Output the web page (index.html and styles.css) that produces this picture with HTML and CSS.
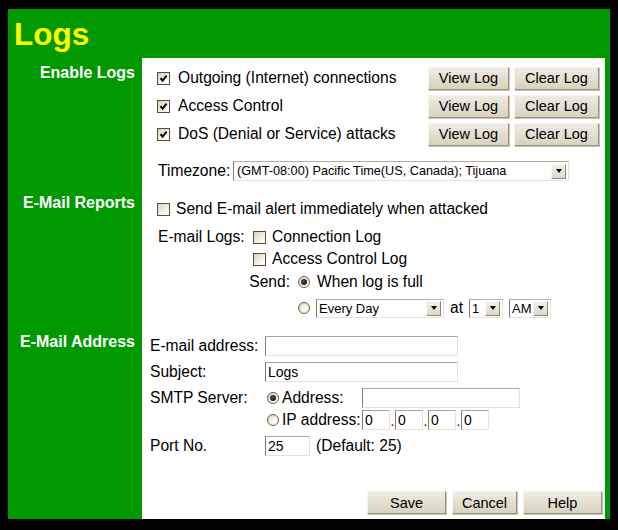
FILE: index.html
```html
<!DOCTYPE html>
<html>
<head>
<meta charset="utf-8">
<title>Logs</title>
<link rel="stylesheet" href="styles.css">
</head>
<body>
<div class="frame">
  <h1 class="title">Logs</h1>
  <div class="grid">
    <div class="side">Enable Logs</div>
    <div class="main logs">
      <div class="logrow">
        <span class="cb on"><svg viewBox="0 0 11 11" width="11" height="11"><path d="M2.5 5.2 L4.6 7.6 L8.6 2.6" fill="none" stroke="#000" stroke-width="2"/></svg></span>
        <span class="lbl">Outgoing (Internet) connections</span>
        <span class="btn view">View Log</span><span class="btn clear">Clear Log</span>
      </div>
      <div class="logrow">
        <span class="cb on"><svg viewBox="0 0 11 11" width="11" height="11"><path d="M2.5 5.2 L4.6 7.6 L8.6 2.6" fill="none" stroke="#000" stroke-width="2"/></svg></span>
        <span class="lbl">Access Control</span>
        <span class="btn view">View Log</span><span class="btn clear">Clear Log</span>
      </div>
      <div class="logrow">
        <span class="cb on"><svg viewBox="0 0 11 11" width="11" height="11"><path d="M2.5 5.2 L4.6 7.6 L8.6 2.6" fill="none" stroke="#000" stroke-width="2"/></svg></span>
        <span class="lbl">DoS (Denial or Service) attacks</span>
        <span class="btn view">View Log</span><span class="btn clear">Clear Log</span>
      </div>
      <div class="tzrow">
        <span>Timezone:</span>
        <div class="sel tz"><span class="val">(GMT-08:00) Pacific Time(US, Canada); Tijuana</span><span class="arr"></span></div>
      </div>
    </div>

    <div class="side">E-Mail Reports</div>
    <div class="main reports">
      <div class="rrow r1"><span class="cb"></span><span class="t6">Send E-mail alert immediately when attacked</span></div>
      <div class="rrow r2"><span class="elab">E-mail Logs:</span><span class="cb"></span><span class="t6">Connection Log</span></div>
      <div class="rrow r3"><span class="ind"></span><span class="cb"></span><span class="t6">Access Control Log</span></div>
      <div class="rrow r4"><span class="slab">Send:</span><span class="rb on"></span><span class="t7">When log is full</span></div>
      <div class="rrow r5"><span class="ind2"></span><span class="rb"></span>
        <div class="sel day"><span class="val">Every Day</span><span class="arr"></span></div>
        <span class="at">at</span>
        <div class="sel hr"><span class="val">1</span><span class="arr"></span></div>
        <div class="sel ampm"><span class="val">AM</span><span class="arr"></span></div>
      </div>
    </div>

    <div class="side">E-Mail Address</div>
    <div class="main addr">
      <div class="arow a1"><span class="alab">E-mail address:</span><span class="inp wide"></span></div>
      <div class="arow a2"><span class="alab">Subject:</span><span class="inp wide">Logs</span></div>
      <div class="arow a3"><span class="alab">SMTP Server:</span><span class="rb on sm"></span><span class="opt">Address:</span><span class="inp host"></span></div>
      <div class="arow a4"><span class="alab"></span><span class="rb sm"></span><span class="opt2">IP address:</span><span class="inp oct">0</span><span class="dot">.</span><span class="inp oct">0</span><span class="dot">.</span><span class="inp oct">0</span><span class="dot">.</span><span class="inp oct">0</span></div>
      <div class="arow a5"><span class="alab">Port No.</span><span class="inp port">25</span><span class="def">(Default: 25)</span></div>
      <div class="actions"><span class="btn save">Save</span><span class="btn cancel">Cancel</span><span class="btn help">Help</span></div>
    </div>
  </div>
</div>
</body>
</html>
```
FILE: styles.css
```css
* { box-sizing: border-box; }
body {
  margin: 0;
  background: #000;
  width: 618px;
  height: 530px;
  overflow: hidden;
  font-family: "Liberation Sans", Arial, sans-serif;
  font-size: 15.6px;
  color: #000;
}
.frame {
  margin: 9px 0 0 8px;
  width: 602px;
  height: 510px;
  background: #009900;
  display: flex;
  flex-direction: column;
}
.title {
  margin: 0;
  height: 49px;
  padding: 10px 0 0 6px;
  font-size: 31.5px;
  line-height: 31px;
  font-weight: bold;
  color: #ffff00;
}
.grid {
  flex: 1;
  display: grid;
  grid-template-columns: 134px 463px;
  grid-template-rows: 130px 139px 1fr;
}
.side {
  color: #fff;
  font-weight: bold;
  font-size: 16px;
  line-height: 18px;
  text-align: right;
  padding: 6px 7px 0 0;
}
.main { background: #fff; }

/* checkbox & radio */
.cb {
  width: 13px;
  height: 13px;
  flex: none;
  border: 1px solid #5c4e34;
  background: linear-gradient(135deg, #d9d0b9 0%, #f4f1ea 60%, #fff 100%);
  display: inline-flex;
  align-items: center;
  justify-content: center;
}
.rb {
  width: 12px;
  height: 12px;
  flex: none;
  border-radius: 50%;
  border: 1px solid #6e5f42;
  background: radial-gradient(circle at 65% 65%, #fff 0%, #f3f0e8 45%, #cfc5ad 100%);
  display: inline-flex;
  align-items: center;
  justify-content: center;
}
.rb.on::after {
  content: "";
  width: 6px;
  height: 6px;
  border-radius: 50%;
  background: radial-gradient(circle at 40% 40%, #555 0%, #111 70%);
}

/* buttons */
.btn {
  height: 23px;
  display: inline-flex;
  align-items: center;
  justify-content: center;
  font-size: 14.5px;
  background: linear-gradient(#eeebe2, #d9d2bf);
  border: 1px solid;
  border-color: #f6f4ee #9b9480 #9b9480 #f6f4ee;
  box-shadow: 1px 1px 0 #c8c1ad;
  flex: none;
}

/* selects & inputs */
.sel {
  height: 20px;
  display: flex;
  align-items: center;
  border: 1px solid;
  border-color: #b3ae9f #e6e2d6 #e6e2d6 #7d7d7d;
  font-size: 13px;
  padding-left: 2px;
  padding-right: 2px;
  background: #fff;
  flex: none;
}
.sel .val { flex: 1; white-space: nowrap; overflow: hidden; }
.arr {
  width: 15px;
  height: 15px;
  flex: none;
  background: linear-gradient(#f2f0ea, #ddd8ca);
  border: 1px solid;
  border-color: #f8f7f3 #8d8877 #8d8877 #f8f7f3;
  display: flex;
  align-items: center;
  justify-content: center;
}
.arr::after {
  content: "";
  border-left: 3.5px solid transparent;
  border-right: 3.5px solid transparent;
  border-top: 4px solid #000;
}
.inp {
  height: 20px;
  display: inline-flex;
  align-items: center;
  border: 1px solid;
  border-color: #aca797 #e6e2d6 #e6e2d6 #7d7d7d;
  font-size: 14px;
  padding-left: 2px;
  background: #fff;
  flex: none;
}

/* section 1 */
.logs { padding: 6px 6px 0 15px; }
.logrow { display: flex; align-items: center; height: 28px; }
.logrow .lbl { margin-left: 8px; flex: 1; }
.btn.view { width: 81px; }
.btn.clear { width: 85px; margin-left: 5px; }
.tzrow {
  margin-top: 13px;
  padding-left: 1px;
  display: flex;
  align-items: center;
}
.tzrow > span { width: 75px; }
.sel.tz { width: 336px; font-size: 12.7px; padding-left: 3px; }

/* section 2 */
.reports { padding: 10px 0 0 15px; }
.rrow { display: flex; align-items: center; height: 22px; }
.r2 { margin-top: 6px; }
.r4 { margin-top: 1px; }
.r5 { margin-top: 4px; }
.t6 { margin-left: 6px; }
.t7 { margin-left: 7px; }
.elab { width: 96px; padding-left: 1px; }
.ind { width: 96px; }
.slab { width: 141px; text-align: right; padding-right: 8px; }
.ind2 { width: 141px; }
.sel.day { width: 128px; margin-left: 6px; height: 19px; }
.at { margin: 0 6px 0 6px; }
.sel.hr { width: 34px; height: 19px; }
.sel.ampm { width: 42px; margin-left: 6px; height: 19px; }

/* section 3 */
.addr { padding: 9px 3px 0 8px; display: flex; flex-direction: column; }
.arow { display: flex; align-items: center; height: 20px; }
.a2, .a3 { margin-top: 6px; }
.a4 { margin-top: 2px; }
.a5 { margin-top: 6px; }
.alab { width: 115px; flex: none; }
.inp.wide { width: 193px; }
.rb.sm { margin-left: 2px; }
.opt { margin-left: 3px; width: 80px; }
.inp.host { width: 158px; }
.opt2 { margin-left: 3px; width: 80px; }
.inp.oct { width: 28px; height: 20px; }
.dot { width: 5px; text-align: center; font-size: 14px; align-self: flex-end; line-height: 18px; }
.inp.port { width: 45px; }
.def { margin-left: 6px; }
.actions {
  margin-top: 35px;
  display: flex;
  justify-content: flex-end;
  gap: 6px;
}
.btn.save { width: 79px; }
.btn.cancel { width: 65px; }
.btn.help { width: 79px; }
```
